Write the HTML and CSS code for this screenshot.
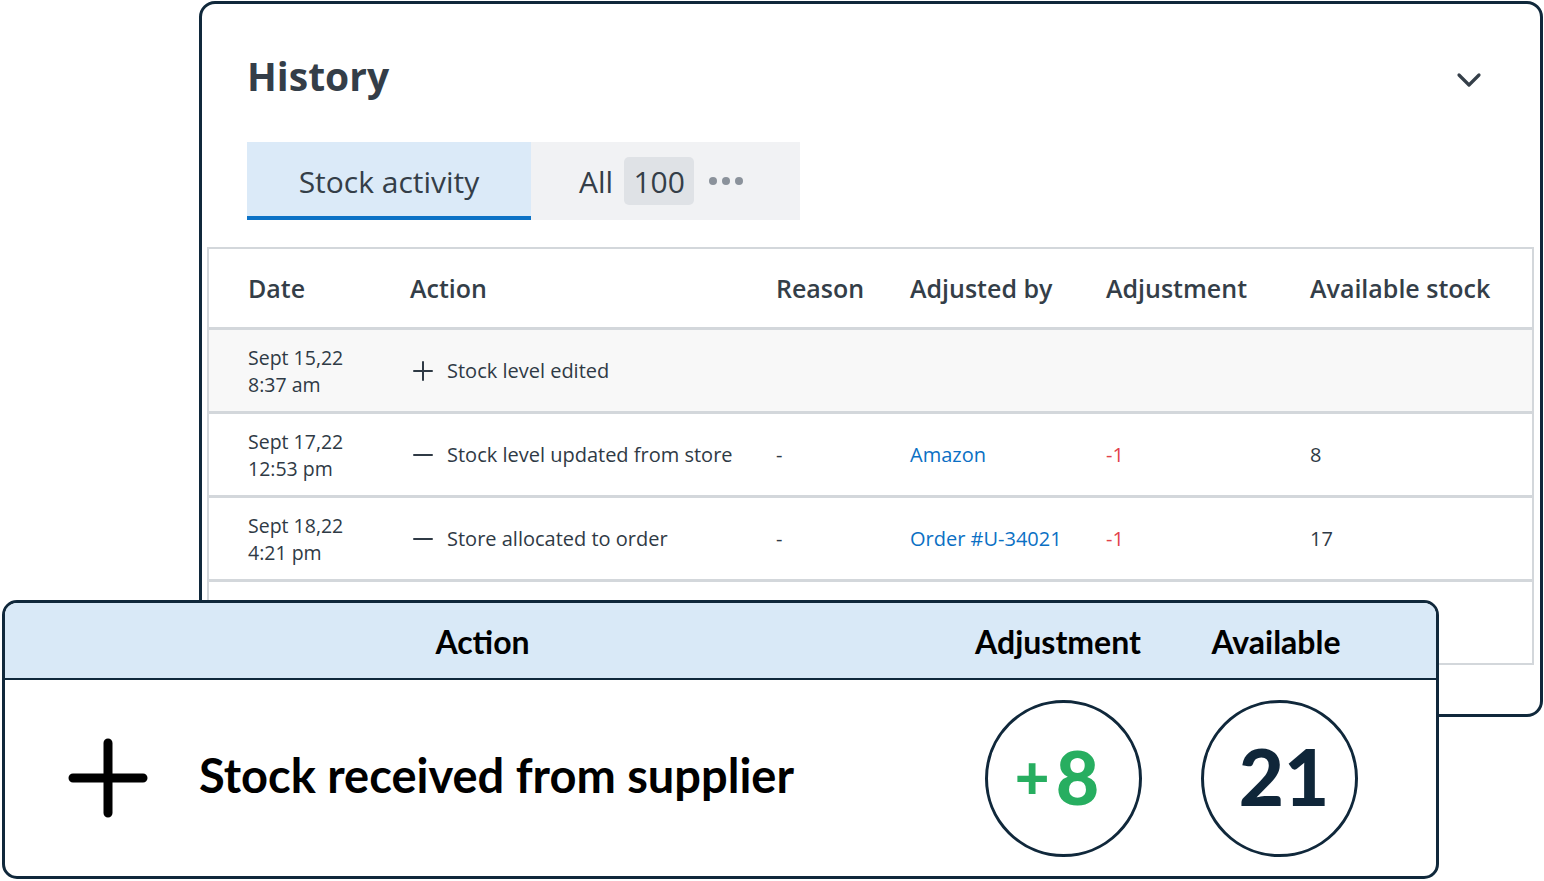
FILE: index.html
```html
<!DOCTYPE html>
<html lang="en">
<head>
<meta charset="utf-8">
<title>Stock history</title>
<link rel="stylesheet" href="styles.css">
</head>
<body>
<div class="stage">
  <section class="history-card">
    <header class="history-head">
      <h1 class="history-title">History</h1>
      <svg class="chevron" width="26" height="18" viewBox="0 0 26 18" aria-hidden="true">
        <path d="M3 4 L13 14 L23 4" fill="none" stroke="#353f49" stroke-width="3.2" stroke-linecap="round" stroke-linejoin="round"/>
      </svg>
    </header>

    <nav class="tabs">
      <div class="tab tab-active">Stock activity</div>
      <div class="tab tab-other">
        <span class="tab-label">All</span>
        <span class="count">100</span>
        <span class="dots"><i></i><i></i><i></i></span>
      </div>
    </nav>

    <div class="table">
      <div class="row row-head">
        <div>Date</div>
        <div>Action</div>
        <div>Reason</div>
        <div>Adjusted by</div>
        <div>Adjustment</div>
        <div>Available stock</div>
      </div>
      <div class="row row-shaded">
        <div class="date">Sept 15,22<br>8:37 am</div>
        <div class="action"><span class="sign plus"></span>Stock level edited</div>
        <div></div><div></div><div></div><div></div>
      </div>
      <div class="row">
        <div class="date">Sept 17,22<br>12:53 pm</div>
        <div class="action"><span class="sign minus"></span>Stock level updated from store</div>
        <div>-</div>
        <div class="link">Amazon</div>
        <div class="neg">-1</div>
        <div>8</div>
      </div>
      <div class="row">
        <div class="date">Sept 18,22<br>4:21 pm</div>
        <div class="action"><span class="sign minus"></span>Store allocated to order</div>
        <div>-</div>
        <div class="link">Order #U-34021</div>
        <div class="neg">-1</div>
        <div>17</div>
      </div>
      <div class="row row-last"></div>
    </div>
  </section>

  <section class="summary-card">
    <div class="summary-head">
      <div>Action</div>
      <div class="head-adjust">Adjustment</div>
      <div class="head-avail">Available</div>
    </div>
    <div class="summary-body">
      <div class="summary-action">
        <svg class="big-plus" width="80" height="80" viewBox="0 0 80 80" aria-hidden="true">
          <path d="M40 5 V75 M5 40 H75" fill="none" stroke="#000" stroke-width="9" stroke-linecap="round"/>
        </svg>
        <span>Stock received from supplier</span>
      </div>
      <div class="bubble-cell"><div class="bubble gain"><small>+</small>8</div></div>
      <div class="bubble-cell"><div class="bubble total">21</div></div>
    </div>
  </section>
</div>
</body>
</html>
```

FILE: styles.css
```css
* { box-sizing: border-box; }

html, body {
  margin: 0;
  padding: 0;
  background: #ffffff;
}

body {
  font-family: "Open Sans", "Noto Sans", sans-serif;
  color: #2f3a45;
}

.stage {
  position: relative;
  width: 1544px;
  height: 881px;
  padding: 1px 0 0 199px;
}

/* ---------- History card ---------- */
.history-card {
  width: 1344px;
  height: 716px;
  border: 3px solid #10283b;
  border-radius: 16px;
  background: #fff;
  overflow: hidden;
}

.history-head {
  display: flex;
  justify-content: space-between;
  align-items: flex-start;
  padding: 45px 58px 0 45px;
  height: 138px;
}

.history-title {
  margin: 0;
  font-size: 39px;
  font-weight: 700;
  line-height: 54px;
  color: #343e48;
}

.chevron {
  margin-top: 22px;
}

.tabs {
  display: flex;
  margin-left: 45px;
  height: 78px;
}

.tab {
  display: flex;
  align-items: center;
  font-size: 30px;
  color: #343e48;
}

.tab-active {
  width: 284px;
  justify-content: center;
  background: #dbeaf8;
  border-bottom: 4px solid #0b72c6;
  padding-top: 4px;
}

.tab-other {
  width: 269px;
  background: #f1f2f4;
  padding-left: 48px;
}

.tab-label {
  margin-right: 11px;
}

.count {
  display: inline-flex;
  align-items: center;
  justify-content: center;
  width: 70px;
  height: 48px;
  border-radius: 5px;
  background: #dfe2e6;
}

.dots {
  display: flex;
  gap: 5px;
  margin-left: 15px;
}

.dots i {
  width: 8px;
  height: 8px;
  border-radius: 50%;
  background: #8b929b;
}

/* ---------- Table ---------- */
.table {
  margin: 27px 6px 0 5px;
  border: 2px solid #d3d7db;
  border-bottom: 0;
}

.row {
  display: grid;
  grid-template-columns: 162px 366px 134px 196px 204px 1fr;
  align-items: center;
  padding-left: 39px;
  height: 84px;
  border-bottom: 3px solid #d3d7db;
  font-size: 20px;
  color: #2f3a45;
}

.row-head {
  height: 81px;
  font-size: 25px;
  font-weight: 600;
  color: #343e48;
}

.row-shaded {
  background: #f8f8f8;
}

.date {
  line-height: 27px;
  font-size: 19.5px;
}

.action {
  display: flex;
  align-items: center;
}

.sign {
  position: relative;
  display: block;
  width: 20px;
  height: 20px;
  margin: 0 14px 0 3px;
  flex: none;
}

.sign::before,
.plus::after {
  content: "";
  position: absolute;
  background: #2f3a45;
  border-radius: 1px;
}

.sign::before {
  left: 0;
  top: 9px;
  width: 20px;
  height: 2.6px;
}

.plus::after {
  left: 8.7px;
  top: 0;
  width: 2.6px;
  height: 20px;
}

.link {
  color: #0b70c4;
}

.neg {
  color: #e2424a;
}

.row-last {
  height: 83px;
  border-bottom: 2px solid #d3d7db;
}

/* ---------- Summary card (sits over the history card) ---------- */
.summary-card {
  position: absolute;
  left: 2px;
  top: 600px;
  width: 1437px;
  height: 279px;
  border: 3px solid #10283b;
  border-radius: 15px;
  background: #fff;
  overflow: hidden;
  font-family: "Lato", "Open Sans", sans-serif;
  color: #000;
}

.summary-head,
.summary-body {
  display: grid;
  grid-template-columns: 955px 210px 220px;
}

.summary-head {
  height: 77px;
  background: #d9e9f7;
  border-bottom: 2px solid #10283b;
  align-items: center;
  text-align: center;
  font-size: 32px;
  font-weight: 700;
  padding-top: 2px;
}

.head-adjust {
  padding-right: 14px;
}

.head-avail {
  padding-right: 8px;
}

.summary-body {
  height: 196px;
  align-items: center;
}

.summary-action {
  display: flex;
  align-items: center;
  padding-left: 63px;
  font-size: 47px;
  font-weight: 700;
  padding-bottom: 6px;
}

.big-plus {
  margin-right: 51px;
  margin-top: 6px;
  flex: none;
}

.bubble-cell {
  display: flex;
  justify-content: center;
}

.bubble {
  width: 157px;
  height: 157px;
  border: 3px solid #10283b;
  border-radius: 50%;
  display: flex;
  align-items: center;
  justify-content: center;
  font-family: "Lato", sans-serif;
  font-weight: 900;
  font-size: 78px;
  line-height: 1;
  padding-bottom: 4px;
}

.bubble.gain {
  color: #27ae60;
  margin-left: -4px;
  font-size: 75px;
}

.bubble.gain small {
  font-size: 60px;
  font-weight: 900;
  margin-right: 6px;
  margin-left: -12px;
}

.bubble.total {
  color: #0f2639;
  margin-left: -2px;
  padding-left: 10px;
}
```
